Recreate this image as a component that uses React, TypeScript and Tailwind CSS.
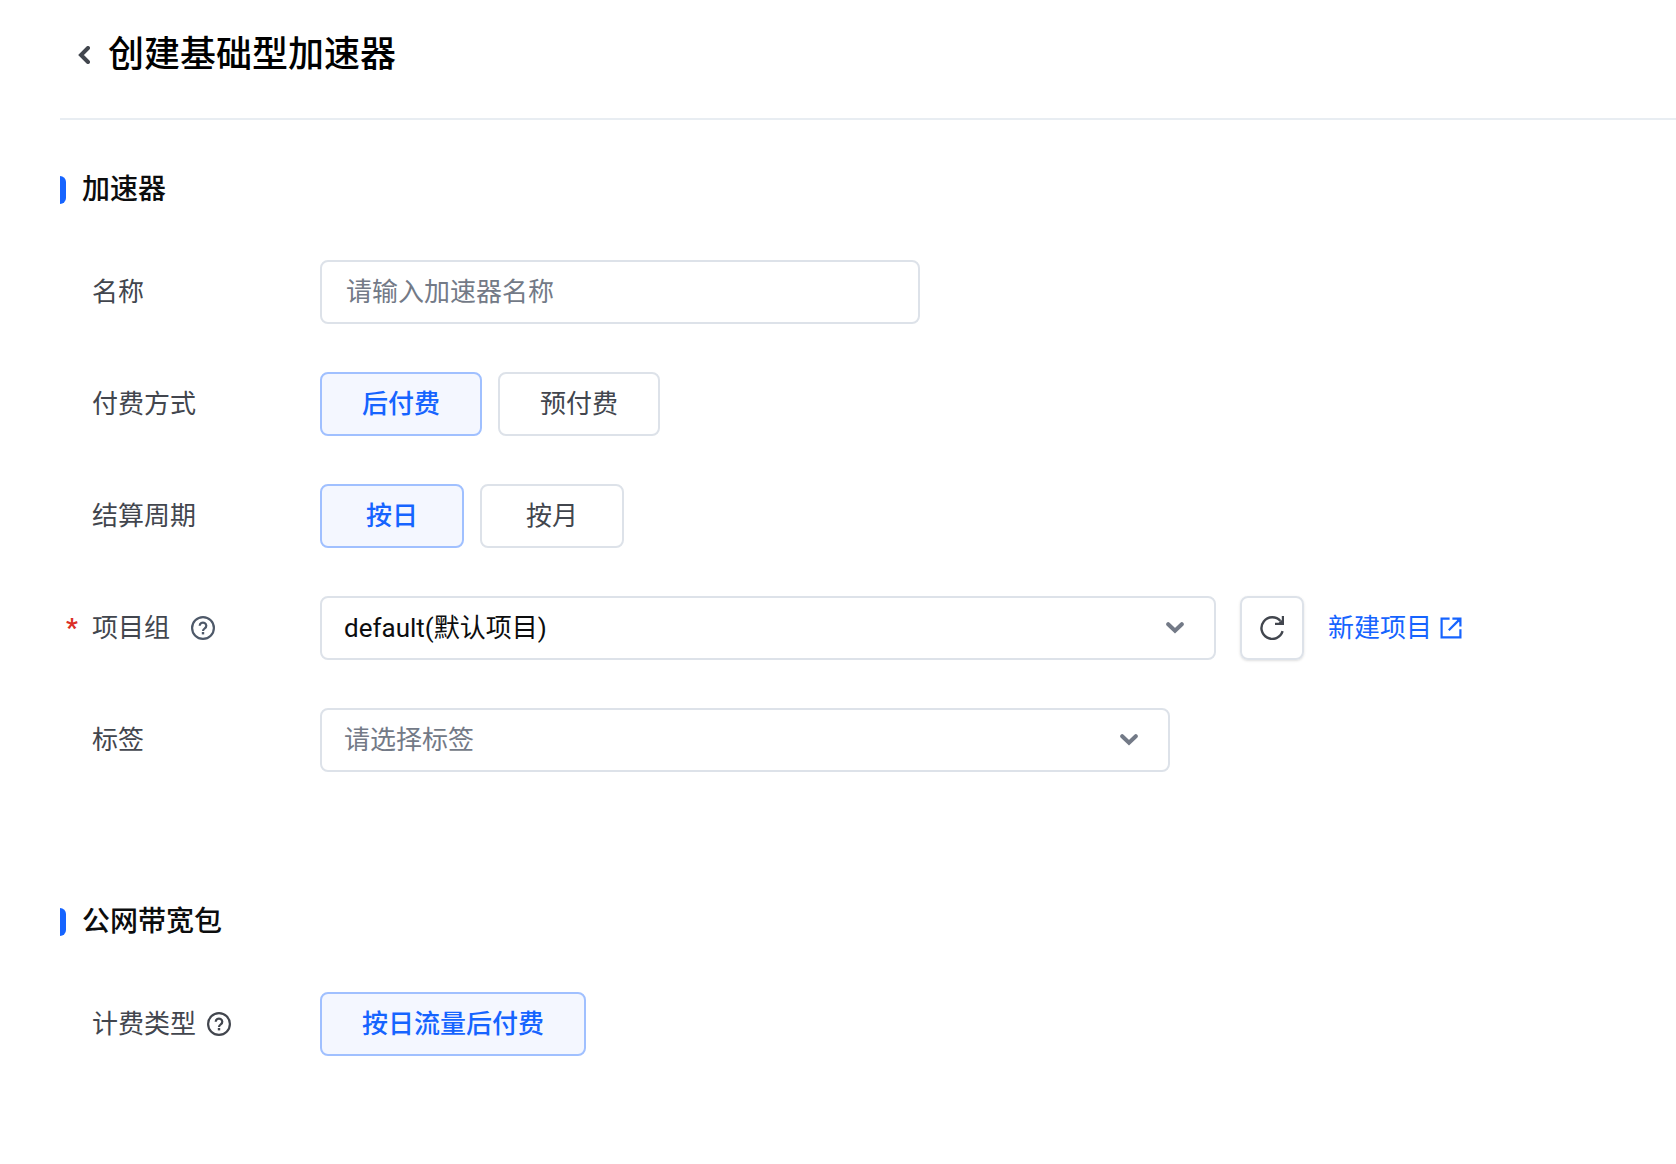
import React, { useState } from 'react';
import clsx from 'clsx';

interface IconProps {
  className?: string;
}

const ChevronLeft: React.FC<IconProps> = ({ className }) => (
  <svg viewBox="0 0 12 18" fill="none" stroke="currentColor" strokeWidth="4" className={className} aria-hidden="true">
    <path d="M10 2 3 9l7 7" strokeLinecap="round" />
  </svg>
);

const ChevronDown: React.FC<IconProps> = ({ className }) => (
  <svg viewBox="0 0 18 12" fill="none" stroke="currentColor" strokeWidth="4" className={className} aria-hidden="true">
    <path d="M2.2 2.2 9 8.8l6.8-6.6" strokeLinecap="round" />
  </svg>
);

const HelpIcon: React.FC<IconProps> = ({ className }) => (
  <svg viewBox="0 0 24 24" fill="none" stroke="currentColor" strokeWidth="2.2" className={className} aria-hidden="true">
    <circle cx="12" cy="12" r="10.9" />
    <path d="M8.7 9.7a3.3 3.1 0 1 1 5.1 2.6c-1.2.8-1.8 1.2-1.8 2.6" />
    <path d="M12 16v2.4" strokeWidth="2.4" />
  </svg>
);

const RefreshIcon: React.FC<IconProps> = ({ className }) => (
  <svg viewBox="0 0 24 24" fill="none" stroke="currentColor" strokeWidth="2.4" className={className} aria-hidden="true">
    <path d="M22.6 15.2A10.8 10.8 0 1 1 20.4 5" />
    <path d="M24 0v9h-9V6.8h3.6L21.8 4V0z" fill="currentColor" stroke="none" />
  </svg>
);

const ExternalIcon: React.FC<IconProps> = ({ className }) => (
  <svg viewBox="0 0 22 22" fill="none" stroke="currentColor" strokeWidth="2.2" className={className} aria-hidden="true">
    <path d="M9.6 1.6H1.6v18.8h18.8v-8.2" />
    <path d="M19.6 2.4 8.8 13.2" />
    <path d="M12.4.5h9.1v9.1h-2.2V5.2l-2.5-2.5h-4.4z" fill="currentColor" stroke="none" />
  </svg>
);

interface FormRowProps {
  label: string;
  id: string;
  htmlFor?: string;
  required?: boolean;
  help?: React.ReactNode;
  children: React.ReactNode;
}

const FormRow: React.FC<FormRowProps> = ({ label, id, htmlFor, required, help, children }) => (
  <div className="flex items-center">
    <div className="flex w-[260px] shrink-0 items-center text-[#42464e]">
      <span className="w-8 shrink-0 pl-1.5 font-bold text-[#db2f26]">{required && '*'}</span>
      {htmlFor ? (
        <label id={id} htmlFor={htmlFor}>{label}</label>
      ) : (
        <span id={id}>{label}</span>
      )}
      {help}
    </div>
    {children}
  </div>
);

interface OptionGroupProps {
  labelledBy: string;
  options: string[];
}

const OptionGroup: React.FC<OptionGroupProps> = ({ labelledBy, options }) => {
  const [value, setValue] = useState(options[0]);

  return (
    <div role="group" aria-labelledby={labelledBy} className="flex gap-4">
      {options.map((option) => (
        <button
          key={option}
          type="button"
          aria-pressed={option === value}
          onClick={() => setValue(option)}
          className={clsx(
            'h-16 min-w-36 rounded-lg border-2 px-10',
            option === value
              ? 'border-[#a0c0ff] bg-[#f4f7ff] font-medium text-[#1664ff]'
              : 'border-[#dde2e9] bg-white text-[#42464e]'
          )}
        >
          {option}
        </button>
      ))}
    </div>
  );
};

const SectionTitle: React.FC<{ children: React.ReactNode }> = ({ children }) => (
  <h2 className="flex items-center gap-4 text-[28px] leading-10 font-medium text-[#0c0d0e]">
    <span className="h-7 w-1.5 rounded-r-md bg-[#1664ff]" />
    {children}
  </h2>
);

const selectClass = 'h-16 w-full appearance-none rounded-lg border-2 border-[#dde2e9] bg-white pr-20 pl-[22px]';

export default function App() {
  return (
    <main className="min-h-screen bg-white pl-[60px] font-[Roboto,'Noto_Sans_CJK_SC',sans-serif] text-[26px] leading-10">
      <header className="flex h-[120px] items-center gap-[18px] border-b-2 border-[#e8edf2] pb-2 pl-[18px]">
        <button type="button" aria-label="返回" className="text-[#42464e]">
          <ChevronLeft className="h-[18px] w-3" />
        </button>
        <h1 className="text-[36px] leading-[54px] font-medium text-black">创建基础型加速器</h1>
      </header>

      <section className="pt-[50px]">
        <SectionTitle>加速器</SectionTitle>
        <div className="mt-[50px] flex flex-col gap-12">
          <FormRow label="名称" id="name-label" htmlFor="name">
            <input
              id="name"
              type="text"
              placeholder="请输入加速器名称"
              className="h-16 w-[600px] rounded-lg border-2 border-[#dde2e9] px-6 text-[#0c0d0e] placeholder:text-[#737a87]"
            />
          </FormRow>
          <FormRow label="付费方式" id="pay-label">
            <OptionGroup labelledBy="pay-label" options={['后付费', '预付费']} />
          </FormRow>
          <FormRow label="结算周期" id="cycle-label">
            <OptionGroup labelledBy="cycle-label" options={['按日', '按月']} />
          </FormRow>
          <FormRow
            label="项目组"
            id="project-label"
            htmlFor="project"
            required
            help={<HelpIcon className="ml-[21px] size-6 text-[#4e5969]" />}
          >
            <div className="relative w-[896px]">
              <select id="project" className={clsx(selectClass, 'text-[#0c0d0e]')}>
                <option>default(默认项目)</option>
              </select>
              <ChevronDown className="pointer-events-none absolute top-[26px] right-8 h-3 w-[18px] text-[#737a87]" />
            </div>
            <button
              type="button"
              aria-label="刷新"
              className="ml-6 flex size-16 items-center justify-center rounded-lg border-2 border-[#dde2e9] text-[#42464e] shadow-sm"
            >
              <RefreshIcon className="size-6" />
            </button>
            <a href="#" className="ml-6 flex items-center gap-2 whitespace-nowrap text-[#1664ff]">
              新建项目
              <ExternalIcon className="size-[22px]" />
            </a>
          </FormRow>
          <FormRow label="标签" id="tag-label" htmlFor="tag">
            <div className="relative w-[850px]">
              <select id="tag" className={clsx(selectClass, 'text-[#737a87]')}>
                <option>请选择标签</option>
              </select>
              <ChevronDown className="pointer-events-none absolute top-[26px] right-8 h-3 w-[18px] text-[#737a87]" />
            </div>
          </FormRow>
        </div>
      </section>

      <section className="pt-[130px] pb-16">
        <SectionTitle>公网带宽包</SectionTitle>
        <div className="mt-[50px]">
          <FormRow
            label="计费类型"
            id="billing-label"
            help={<HelpIcon className="ml-[11px] size-6 text-[#42464e]" />}
          >
            <OptionGroup labelledBy="billing-label" options={['按日流量后付费']} />
          </FormRow>
        </div>
      </section>
    </main>
  );
}
